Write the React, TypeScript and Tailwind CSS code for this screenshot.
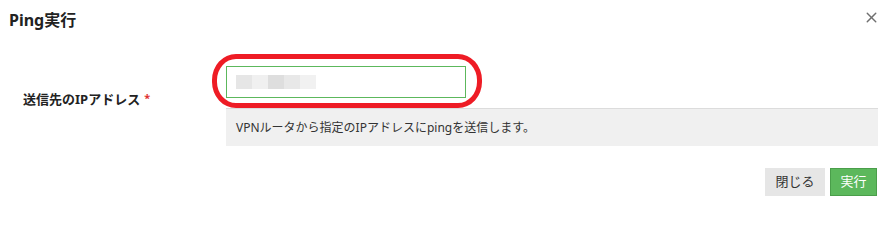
import { X } from 'lucide-react';

const mosaic = ['bg-[#e6e6e6]', 'bg-[#f0f0f0]', 'bg-[#dedede]', 'bg-[#e8e8e8]', 'bg-[#f1f1f1]'];

export default function App() {
  return (
    <div
      className="w-[885px] h-[206px] bg-white flex flex-col text-[#222]"
      style={{ fontFamily: '"Noto Sans", "Noto Sans CJK JP", sans-serif' }}
    >
      {/* header */}
      <div className="flex items-center justify-between h-[40px] pl-[9px] pr-[5px]">
        <h1 className="text-[16px] font-bold leading-none">Ping実行</h1>
        <button className="text-[#6f6f6f] -mt-[5px]">
          <X className="w-[17px] h-[17px]" strokeWidth={2} />
        </button>
      </div>

      {/* body */}
      <div className="flex items-start pt-[26px]">
        <div className="w-[226px] shrink-0 pl-[23px] pt-[27px]">
          <div className="flex items-center h-[13px]">
            <span className="text-[13px] font-bold leading-none">送信先のIPアドレス</span>
            <span className="text-[#e03030] text-[11px] font-bold leading-none ml-[4px] -mt-[4px]">*</span>
          </div>
        </div>
        <div className="flex-1 pr-[7px]">
          <div className="relative w-[240px] h-[32px] border border-[#5cb85c] flex items-center pl-[9px]">
            {mosaic.map((c, i) => (
              <span key={i} className={`w-[16px] h-[14px] ${c}`} />
            ))}
            {/* annotation */}
            <div className="absolute left-[-15px] top-[-13px] w-[270px] h-[54px] border-[5px] border-[#ee1c25] rounded-[24px/26px]" />
          </div>
          <div className="mt-[10px] h-[38px] bg-[#f0f0f0] border-t border-[#dcdcdc] flex items-center pl-[10px] text-[12px] text-[#333]">
            VPNルータから指定のIPアドレスにpingを送信します。
          </div>
        </div>
      </div>

      {/* footer */}
      <div className="flex justify-end gap-[5px] pr-[8px] mt-[22px]">
        <button className="w-[60px] h-[28px] bg-[#e6e6e6] text-[13px] text-[#333]">閉じる</button>
        <button className="w-[47px] h-[28px] bg-[#5cb85c] border border-[#4a9e4a] text-[13px] text-white">実行</button>
      </div>
    </div>
  );
}
